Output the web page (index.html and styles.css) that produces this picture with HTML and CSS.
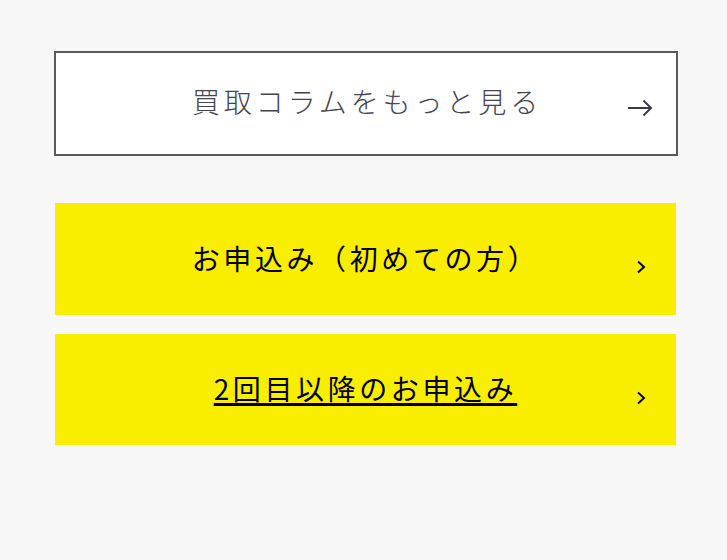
FILE: index.html
```html
<!DOCTYPE html>
<html lang="ja">
<head>
<meta charset="utf-8">
<link rel="stylesheet" href="styles.css">
</head>
<body>
<div class="wrap">
  <a class="more" href="#">
    <span class="more-label">買取コラムをもっと見る</span>
    <svg class="arrow" width="26" height="18" viewBox="0 0 26 18"><path d="M1 9H24M16.5 1.5L24 9L16.5 16.5" fill="none" stroke="#3c3a48" stroke-width="2"/></svg>
  </a>
  <div class="cta-list">
    <a class="cta" href="#">
      <span class="cta-label">お申込み（初めての方）</span>
      <svg class="chev" width="10" height="14" viewBox="0 0 10 14"><path d="M2 1.5L8 7L2 12.5" fill="none" stroke="#000" stroke-width="2"/></svg>
    </a>
    <a class="cta cta-2" href="#">
      <span class="cta-label underline">2回目以降のお申込み</span>
      <svg class="chev" width="10" height="14" viewBox="0 0 10 14"><path d="M2 1.5L8 7L2 12.5" fill="none" stroke="#000" stroke-width="2"/></svg>
    </a>
  </div>
</div>
</body>
</html>
```

FILE: styles.css
```css
html, body {
  margin: 0;
  padding: 0;
  background: #f7f7f7;
}
body {
  font-family: "Noto Sans CJK JP", "Noto Sans", sans-serif;
}
.wrap {
  padding: 51px 0 0 54px;
}
.more {
  position: relative;
  display: flex;
  align-items: center;
  justify-content: center;
  box-sizing: border-box;
  width: 624px;
  height: 105px;
  border: 2px solid #5a5a5e;
  background: #fff;
  text-decoration: none;
}
.more-label {
  font-size: 28px;
  font-weight: 300;
  letter-spacing: 3.9px;
  color: #44434f;
  line-height: 1;
  margin-left: 2px;
  margin-top: -5px;
}
.arrow {
  position: absolute;
  right: 23px;
  top: 46px;
}
.cta-list {
  display: flex;
  flex-direction: column;
  gap: 19px;
  margin: 47px 0 0 1px;
}
.cta {
  position: relative;
  display: flex;
  align-items: center;
  justify-content: center;
  width: 621px;
  height: 112px;
  background: #f9ee00;
  text-decoration: none;
  color: #000;
}
.cta-2 {
  height: 111px;
}
.cta-label {
  font-size: 28px;
  font-weight: 400;
  letter-spacing: 3.6px;
  line-height: 1;
  color: #000;
  margin-top: -2px;
}
.underline {
  text-decoration: underline;
  text-decoration-thickness: 2.5px;
  text-underline-offset: 3px;
  margin-top: -4px;
}
.chev {
  position: absolute;
  right: 30px;
  top: 57px;
}
```
